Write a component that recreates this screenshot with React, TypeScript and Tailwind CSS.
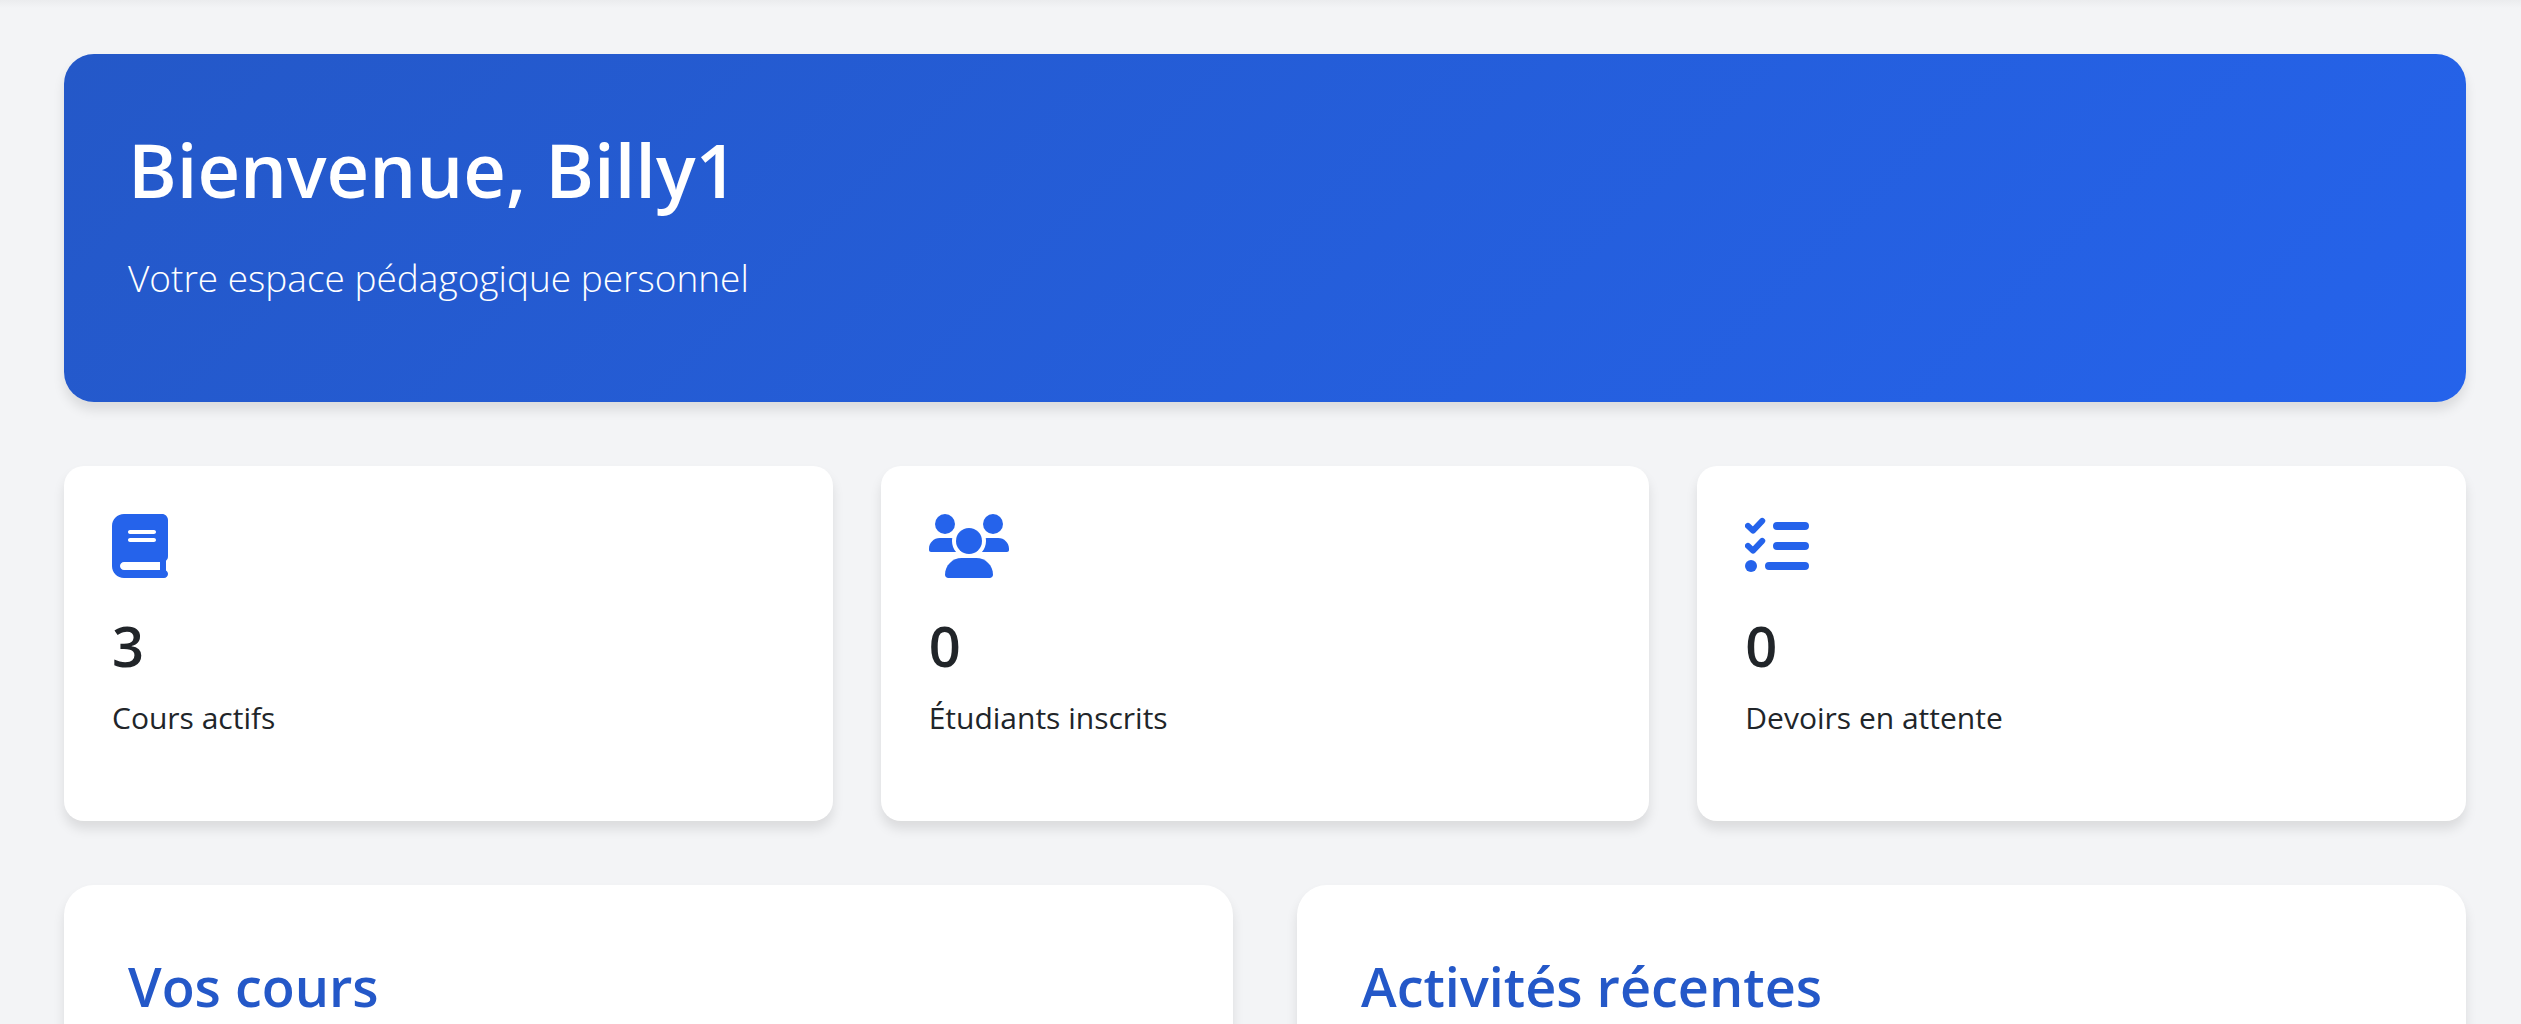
type IconProps = { className?: string };

function BookIcon({ className }: IconProps) {
  return (
    <svg viewBox="0 0 448 512" fill="currentColor" className={className} aria-hidden="true">
      <path d="M384 512H96c-53 0-96-43-96-96V96C0 43 43 0 96 0H400c26.500 0 48 21.500 48 48V336c0 20.900-6 28.700-16 37.300V452c10 5.500 16 16 16 28 0 17.700-14.300 32-32 32H384zM96 384c-17.700 0-32 14.300-32 32s14.300 32 32 32H384V384H96zM144 128c-8.800 0-16 7.200-16 16s7.200 16 16 16H336c8.800 0 16-7.200 16-16s-7.200-16-16-16H144zm0 64c-8.800 0-16 7.200-16 16s7.200 16 16 16H336c8.800 0 16-7.200 16-16s-7.200-16-16-16H144z" />
    </svg>
  );
}

function UsersIcon({ className }: IconProps) {
  const side =
    "M86 192h82c6.500 0 12.700 .8 18.600 2.200C184.900 201.300 184 208.600 184 216c0 33.800 12.300 64.600 32.700 88H16c-8.800 0-16-7.200-16-16v-10C0 230.500 38.500 192 86 192z";
  return (
    <svg viewBox="0 0 640 512" fill="currentColor" className={className} aria-hidden="true">
      <circle cx="128" cy="80" r="80" />
      <circle cx="512" cy="80" r="80" />
      <path d={side} />
      <path d={side} transform="matrix(-1 0 0 1 640 0)" />
      <circle cx="320" cy="216" r="104" />
      <path d="M128 485.300C128 411.700 187.700 352 261.300 352H378.700C452.300 352 512 411.700 512 485.300c0 14.700-11.900 26.700-26.700 26.700H154.700c-14.700 0-26.700-11.900-26.700-26.700z" />
    </svg>
  );
}

function TasksIcon({ className }: IconProps) {
  return (
    <svg
      viewBox="0 0 512 512"
      fill="none"
      stroke="currentColor"
      strokeLinecap="round"
      strokeLinejoin="round"
      className={className}
      aria-hidden="true"
    >
      <path strokeWidth="48" d="M24 95l40 38 74-78M24 255l40 38 74-78" />
      <path strokeWidth="64" d="M256 96H480M256 256H480M192 416H480" />
      <circle cx="48" cy="416" r="48" fill="currentColor" stroke="none" />
    </svg>
  );
}

const stats = [
  { value: "3", label: "Cours actifs", icon: <BookIcon className="h-16 w-14" /> },
  { value: "0", label: "Étudiants inscrits", icon: <UsersIcon className="h-16 w-20" /> },
  { value: "0", label: "Devoirs en attente", icon: <TasksIcon className="size-16" /> },
];

const panels = ["Vos cours", "Activités récentes"];

export default function App() {
  return (
    <div className="min-h-screen bg-[#f3f4f6] pb-16 font-['Open_Sans',sans-serif] text-[#212529]">
      <div className="h-2 bg-linear-to-b from-[#ebecee] to-[#f3f4f6]" />
      <main className="mt-[46px] mr-[55px] ml-16 flex flex-col gap-16">
        <header className="rounded-[30px] bg-linear-135 from-[#2458c8] to-[#2563eb] p-16 text-white shadow-[0_8px_12px_rgba(0,0,0,0.1)]">
          <h1 className="mb-6 text-[74px] leading-[104px] font-semibold">Bienvenue, Billy1</h1>
          <p className="mb-7 text-[37px] leading-[64px] font-light">Votre espace pédagogique personnel</p>
        </header>

        <section className="grid grid-cols-3 gap-12">
          {stats.map((stat) => (
            <article
              key={stat.label}
              className="rounded-[20px] bg-white p-12 shadow-[0_8px_12px_rgba(0,0,0,0.1)]"
            >
              <div className="text-[#2563eb]">{stat.icon}</div>
              <h3 className="mt-7 mb-2.5 text-[56px] leading-[78px] font-semibold">{stat.value}</h3>
              <p className="mb-[31px] text-[30px] leading-[48px]">{stat.label}</p>
            </article>
          ))}
        </section>

        <section className="grid grid-cols-2 gap-16">
          {panels.map((title) => (
            <article
              key={title}
              className="rounded-[30px] bg-white p-16 shadow-[0_8px_12px_rgba(0,0,0,0.1)]"
            >
              <h2 className="text-[54px] leading-[74px] font-semibold text-[#2458c8]">{title}</h2>
            </article>
          ))}
        </section>
      </main>
    </div>
  );
}
